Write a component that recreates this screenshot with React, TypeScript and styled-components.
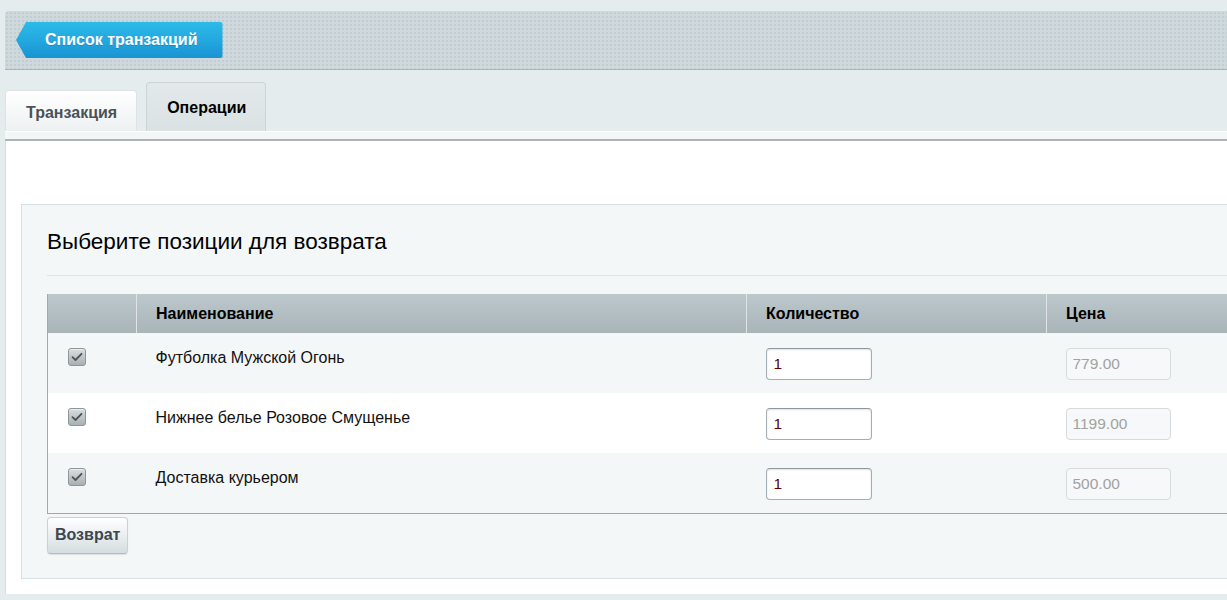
import React from "react";
import styled, { createGlobalStyle } from "styled-components";

const Global = createGlobalStyle`
  html, body { margin: 0; padding: 0; }
  body {
    background: #e5eced;
    font-family: "Liberation Sans", Arial, sans-serif;
    overflow: hidden;
    width: 1227px;
    height: 600px;
  }
`;

const Page = styled.div`
  width: 1300px;
  padding: 11px 0 0 5px;
  box-sizing: border-box;
`;

const Toolbar = styled.div`
  height: 59px;
  border-bottom: 1px solid #a7b4ba;
  border-top-left-radius: 4px;
  background-color: #cfd9dd;
  background-image: radial-gradient(circle, #c2cdd2 0.8px, transparent 1.1px);
  background-size: 4px 4px;
  display: flex;
  align-items: flex-start;
  padding: 11px 0 0 11px;
  box-sizing: border-box;
`;

const BackButton = styled.button`
  height: 36px;
  padding: 0 25px 0 29px;
  border: none;
  border-radius: 0 3px 3px 0;
  background: linear-gradient(to bottom, #2cbbe9 0%, #22a6de 55%, #1a93d2 100%);
  color: #fff;
  font-family: "Liberation Sans", Arial, sans-serif;
  font-weight: bold;
  font-size: 16px;
  clip-path: polygon(10px 0, 100% 0, 100% 100%, 10px 100%, 0 50%);
  cursor: pointer;
  text-shadow: 0 1px 0 rgba(0, 60, 110, 0.25);
`;

const Tabs = styled.div`
  display: flex;
  align-items: flex-end;
  gap: 9px;
  height: 61px;
`;

const Tab = styled.div<{ $active?: boolean }>`
  box-sizing: border-box;
  height: ${(p) => (p.$active ? 49 : 41)}px;
  padding: ${(p) => (p.$active ? "2px 19px 0 20px" : "4px 19px 0 20px")};
  display: flex;
  align-items: center;
  font-weight: bold;
  font-size: 16px;
  color: ${(p) => (p.$active ? "#000" : "#4a5257")};
  border: 1px solid ${(p) => (p.$active ? "#cdd5d8" : "#dde3e5")};
  border-bottom: none;
  border-radius: 4px 4px 0 0;
  background: ${(p) =>
    p.$active
      ? "linear-gradient(to bottom, #e3e9eb, #dbe2e4)"
      : "linear-gradient(to bottom, #ffffff, #edf1f2)"};
`;

const TabLine = styled.div`
  height: 7px;
  background: #f3f6f7;
  border-top: 1px solid #ffffff;
  border-bottom: 2px solid #abb5b9;
`;

const Content = styled.div`
  background: #fff;
  padding: 63px 0 15px 15px;
  border-left: 1px solid #d6dee1;
`;

const Panel = styled.div`
  background: #f4f7f8;
  border: 1px solid #d7e0e4;
  padding: 25px 0 24px 25px;
`;

const Heading = styled.h2`
  margin: 0;
  font-weight: normal;
  font-size: 22.5px;
  line-height: 24px;
  color: #000;
`;

const Rule = styled.div`
  height: 1px;
  background: #dde4e7;
  margin: 21px 0 18px;
`;

const Table = styled.table`
  border-collapse: collapse;
  table-layout: fixed;
  width: 1250px;
  border-left: 1px solid #a3abae;
  border-bottom: 1px solid #9fa8ab;
`;

const Th = styled.th<{ $w: number }>`
  width: ${(p) => p.$w}px;
  height: 39px;
  padding: 0 0 0 19px;
  text-align: left;
  font-size: 16px;
  font-weight: bold;
  color: #000;
  background: linear-gradient(to bottom, #bdc8cc, #a8b4b8);
  border-left: 1px solid #dfe5e7;
  box-sizing: border-box;
  &:first-child { border-left: none; }
`;

const Tr = styled.tr<{ $alt?: boolean }>`
  background: ${(p) => (p.$alt ? "#ffffff" : "#f4f7f8")};
`;

const Td = styled.td`
  height: 60px;
  padding: 15px 0 0 19px;
  vertical-align: top;
  box-sizing: border-box;
  font-size: 16px;
  line-height: 18px;
  color: #000;
  &:first-child { padding-left: 20px; }
`;

const NameCell = styled(Td)`
  padding-top: 16px;
  color: #111;
`;

const Check = styled.span`
  display: inline-block;
  width: 18px;
  height: 18px;
  box-sizing: border-box;
  border: 1px solid #8f9699;
  border-radius: 3px;
  background: linear-gradient(to bottom, #d9dddf, #a9b0b3);
  box-shadow: inset 0 1px 0 rgba(255, 255, 255, 0.5);
  svg { display: block; }
`;

const QtyInput = styled.input`
  width: 106px;
  height: 32px;
  box-sizing: border-box;
  border: 1px solid #a3adb3;
  border-top-color: #8d979d;
  border-radius: 4px;
  padding: 0 7px;
  font-family: "Liberation Sans", Arial, sans-serif;
  font-size: 15.5px;
  color: #5a0000;
  background: #fff;
  box-shadow: inset 0 1px 2px rgba(0, 0, 0, 0.12);
  outline: none;
`;

const PriceInput = styled.input`
  width: 105px;
  height: 32px;
  box-sizing: border-box;
  border: 1px solid #d5dbde;
  border-radius: 4px;
  padding: 0 6px;
  font-family: "Liberation Sans", Arial, sans-serif;
  font-size: 15.5px;
  color: #a2a2a2;
  -webkit-text-fill-color: #a2a2a2;
  background: #f6f8f9;
  opacity: 1;
`;

const ReturnButton = styled.button`
  margin-top: 3px;
  height: 37px;
  padding: 0 7px;
  border: 1px solid #c9d1d4;
  border-bottom-color: #b3bcc0;
  border-radius: 4px;
  background: linear-gradient(to bottom, #ffffff, #d5dde0);
  box-shadow: 0 1px 1px rgba(0, 0, 0, 0.1);
  font-family: "Liberation Sans", Arial, sans-serif;
  font-weight: bold;
  font-size: 16px;
  color: #3c4850;
  cursor: pointer;
`;

const CheckBox = () => (
  <Check>
    <svg width="16" height="16" viewBox="0 0 16 16">
      <path d="M3.5 8.2 L6.5 11 L12.5 4.8" fill="none" stroke="#4d5255" strokeWidth="1.8" strokeLinecap="round" strokeLinejoin="round" />
    </svg>
  </Check>
);

const rows = [
  { name: "Футболка Мужской Огонь", qty: "1", price: "779.00" },
  { name: "Нижнее белье Розовое Смущенье", qty: "1", price: "1199.00" },
  { name: "Доставка курьером", qty: "1", price: "500.00" },
];

export default function App() {
  return (
    <>
      <Global />
      <Page>
        <Toolbar>
          <BackButton>Список транзакций</BackButton>
        </Toolbar>
        <Tabs>
          <Tab>Транзакция</Tab>
          <Tab $active>Операции</Tab>
        </Tabs>
        <TabLine />
        <Content>
          <Panel>
            <Heading>Выберите позиции для возврата</Heading>
            <Rule />
            <Table>
              <thead>
                <tr>
                  <Th $w={89}></Th>
                  <Th $w={610}>Наименование</Th>
                  <Th $w={300}>Количество</Th>
                  <Th $w={251}>Цена</Th>
                </tr>
              </thead>
              <tbody>
                {rows.map((r, i) => (
                  <Tr key={r.name} $alt={i % 2 === 1}>
                    <Td>
                      <CheckBox />
                    </Td>
                    <NameCell>{r.name}</NameCell>
                    <Td>
                      <QtyInput defaultValue={r.qty} />
                    </Td>
                    <Td>
                      <PriceInput value={r.price} disabled readOnly />
                    </Td>
                  </Tr>
                ))}
              </tbody>
            </Table>
            <ReturnButton>Возврат</ReturnButton>
          </Panel>
        </Content>
      </Page>
    </>
  );
}
